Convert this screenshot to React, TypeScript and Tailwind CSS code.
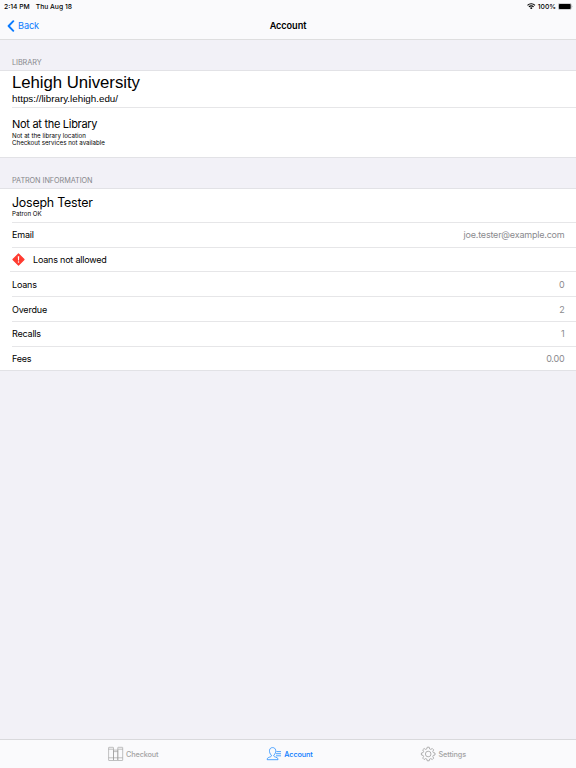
import type { ReactNode } from "react";

function WifiIcon() {
  return (
    <svg width="8.5" height="6.5" viewBox="0 0 16 12" className="shrink-0">
      <path d="M8 11.8 5.6 9.2a3.4 3.4 0 0 1 4.8 0Z" fill="#000" />
      <path d="M3.6 7.1a6.2 6.2 0 0 1 8.8 0M1 4.2a9.9 9.9 0 0 1 14 0" fill="none" stroke="#000" strokeWidth="2.1" />
    </svg>
  );
}

function BatteryIcon() {
  return (
    <svg width="15" height="7" viewBox="0 0 15 7" className="shrink-0">
      <rect x="0.3" y="0.3" width="13" height="6.4" rx="1.6" fill="none" stroke="#a5a5a8" strokeWidth="0.6" />
      <rect x="0.9" y="0.9" width="11.8" height="5.2" rx="0.8" fill="#000" />
      <path d="M13.8 2.5c.8.3.8 1.7 0 2Z" fill="#a5a5a8" />
    </svg>
  );
}

function WarningIcon() {
  return (
    <svg width="13" height="13" viewBox="0 0 13 13" className="shrink-0">
      <path d="M6.5 1 12 6.5 6.5 12 1 6.5Z" fill="#ff3b30" stroke="#ff3b30" strokeWidth="1.2" strokeLinejoin="round" />
      <path d="M5.8 3.2h1.4L7 7.4H6Z" fill="#fff" />
      <circle cx="6.5" cy="9" r="0.75" fill="#fff" />
    </svg>
  );
}

function BooksIcon() {
  return (
    <svg width="16" height="16" viewBox="0 0 16 16" className="shrink-0" fill="none" stroke="#999" strokeWidth="0.6">
      <rect x="0.6" y="1.3" width="4.9" height="13.2" rx="0.4" />
      <rect x="5.5" y="4.1" width="4.3" height="10.4" rx="0.3" />
      <rect x="9.8" y="1.3" width="4.9" height="13.2" rx="0.4" />
      <path d="M.6 3.2h4.9M.6 11.8h4.9M5.5 5.6h4.3M5.5 11.8h4.3M9.8 3.2h4.9M9.8 11.8h4.9" />
    </svg>
  );
}

function PersonIcon() {
  return (
    <svg width="16" height="16" viewBox="-0.8 0 16 16" className="shrink-0" fill="none" stroke="#1787ff" strokeWidth="0.75">
      <path d="M4.6 9.3C3.1 7.9 2.5 5.9 2.7 4.3 3 2.4 4.2 1.6 5.8 1.6s2.8.8 3.1 2.7c.2 1.6-.4 3.6-1.9 5v.8c.2.8 3.5 1.2 4 2.3.2.5.2.9.2 1.3H.4c0-.5 0-.9.2-1.3.5-1.1 3.8-1.5 4-2.3Z" />
      <path d="M9.6 5.6h4.6M9.2 7.7h5M9.2 9.8h5" />
    </svg>
  );
}

function GearIcon() {
  return (
    <svg width="16" height="16" viewBox="0.8 0 16 16" className="shrink-0 overflow-visible" fill="none" stroke="#999" strokeWidth="0.75">
      <circle cx="8" cy="8" r="2.8" />
      <path
        strokeLinejoin="round"
        d="M7 1.2h2l.4 1.7 1.2.5 1.5-.9 1.4 1.4-.9 1.5.5 1.2 1.7.4v2l-1.7.4-.5 1.2.9 1.5-1.4 1.4-1.5-.9-1.2.5-.4 1.7H7l-.4-1.7-1.2-.5-1.5.9-1.4-1.4.9-1.5-.5-1.2L1.2 9V7l1.7-.4.5-1.2-.9-1.5 1.4-1.4 1.5.9 1.2-.5Z"
      />
    </svg>
  );
}

function SectionHeader({ children, className }: { children: ReactNode; className: string }) {
  return (
    <h2 className={`flex items-end border-b border-[#e2e2e6] pl-3 text-[7.3px] leading-[9px] text-[#87878c] ${className}`}>
      {children}
    </h2>
  );
}

function Row({ label, value, height, last }: { label: string; value: string; height: string; last?: boolean }) {
  return (
    <div className={last ? "border-b border-[#e2e2e6]" : "pl-3"}>
      <div className={`flex items-center justify-between pr-[11.5px] ${height} ${last ? "pl-3" : "border-b border-[#e6e6e8]"}`}>
        <span>{label}</span>
        <span className="text-[#8a8a8e]">{value}</span>
      </div>
    </div>
  );
}

function Tab({ icon, label, active }: { icon: ReactNode; label: string; active?: boolean }) {
  return (
    <button
      className={`flex items-center gap-[2px] text-[7.3px] leading-[9px] font-medium tracking-[-0.12px] ${active ? "text-[#0a7aff]" : "text-[#a3a3a3]"}`}
    >
      {icon}
      <span>{label}</span>
    </button>
  );
}

export default function App() {
  return (
    <div className="flex h-[768px] w-[576px] flex-col overflow-hidden bg-[#f2f1f7] font-[Inter,sans-serif] text-[9px] leading-[12px] tracking-[-0.2px] text-black">
      <header className="h-10 border-b border-[#dededf] bg-[#fafafc]">
        <div className="flex h-3 items-center justify-between pr-[3px] pl-1 text-[6.75px] leading-[9px] font-medium tracking-normal">
          <div className="flex gap-[6px]">
            <span>2:14 PM</span>
            <span>Thu Aug 18</span>
          </div>
          <div className="flex items-center gap-[2px]">
            <WifiIcon />
            <span>100%</span>
            <BatteryIcon />
          </div>
        </div>
        <div className="grid h-[27px] grid-cols-3 items-center text-[9.2px] tracking-[-0.1px]">
          <button className="flex items-center gap-[3px] pl-[7px] text-[#0a7aff]">
            <svg width="8" height="12" viewBox="0 0 8 12" className="shrink-0">
              <path d="M6.3 1.2 1.6 6l4.7 4.8" fill="none" stroke="#0a7aff" strokeWidth="1.9" strokeLinecap="round" strokeLinejoin="round" />
            </svg>
            <span>Back</span>
          </button>
          <h1 className="text-center font-semibold">Account</h1>
        </div>
      </header>
      <main className="flex-1">
        <SectionHeader className="h-[31px] pb-[3px] tracking-[-0.08px]">LIBRARY</SectionHeader>
        <section className="border-b border-[#e2e2e6] bg-white pl-3">
          <div className="h-[37px] border-b border-[#e6e6e8] font-['Liberation_Sans',Arial,sans-serif] tracking-normal">
            <div className="text-[16.8px] leading-[23px] tracking-[-0.05px]">Lehigh University</div>
            <div className="text-[9.8px] leading-[10px]">https://library.lehigh.edu/</div>
          </div>
          <div className="h-[49px] pt-[8px]">
            <div className="text-[11px] leading-[16px] tracking-[-0.29px]">Not at the Library</div>
            <div className="text-[6.2px] leading-[7.4px] tracking-normal">
              <div>Not at the library location</div>
              <div>Checkout services not available</div>
            </div>
          </div>
        </section>
        <SectionHeader className="h-[31px] pb-[3px] tracking-[-0.08px]">PATRON INFORMATION</SectionHeader>
        <section className="bg-white">
          <div className="pl-3">
            <div className="h-[34px] border-b border-[#e6e6e8] pt-[6px]">
              <div className="text-[12.4px] leading-[15px]">Joseph Tester</div>
              <div className="text-[6.2px] leading-[7px] tracking-normal">Patron OK</div>
            </div>
          </div>
          <Row label="Email" value="joe.tester@example.com" height="h-[25px]" />
          <div className="pl-[10px]">
            <div className="flex h-6 items-center gap-[8px] border-b border-[#e6e6e8] pl-[2px]">
              <WarningIcon />
              <span>Loans not allowed</span>
            </div>
          </div>
          <Row label="Loans" value="0" height="h-[25px] pt-[2px]" />
          <Row label="Overdue" value="2" height="h-[25px] pt-px" />
          <Row label="Recalls" value="1" height="h-[25px]" />
          <Row label="Fees" value="0.00" height="h-[23px]" last />
        </section>
      </main>
      <nav className="flex h-[29px] items-center justify-between border-t border-[#d9d9dc] bg-[#fafafc] pr-[110px] pl-[108px]">
        <Tab icon={<BooksIcon />} label="Checkout" />
        <Tab icon={<PersonIcon />} label="Account" active />
        <Tab icon={<GearIcon />} label="Settings" />
      </nav>
    </div>
  );
}
